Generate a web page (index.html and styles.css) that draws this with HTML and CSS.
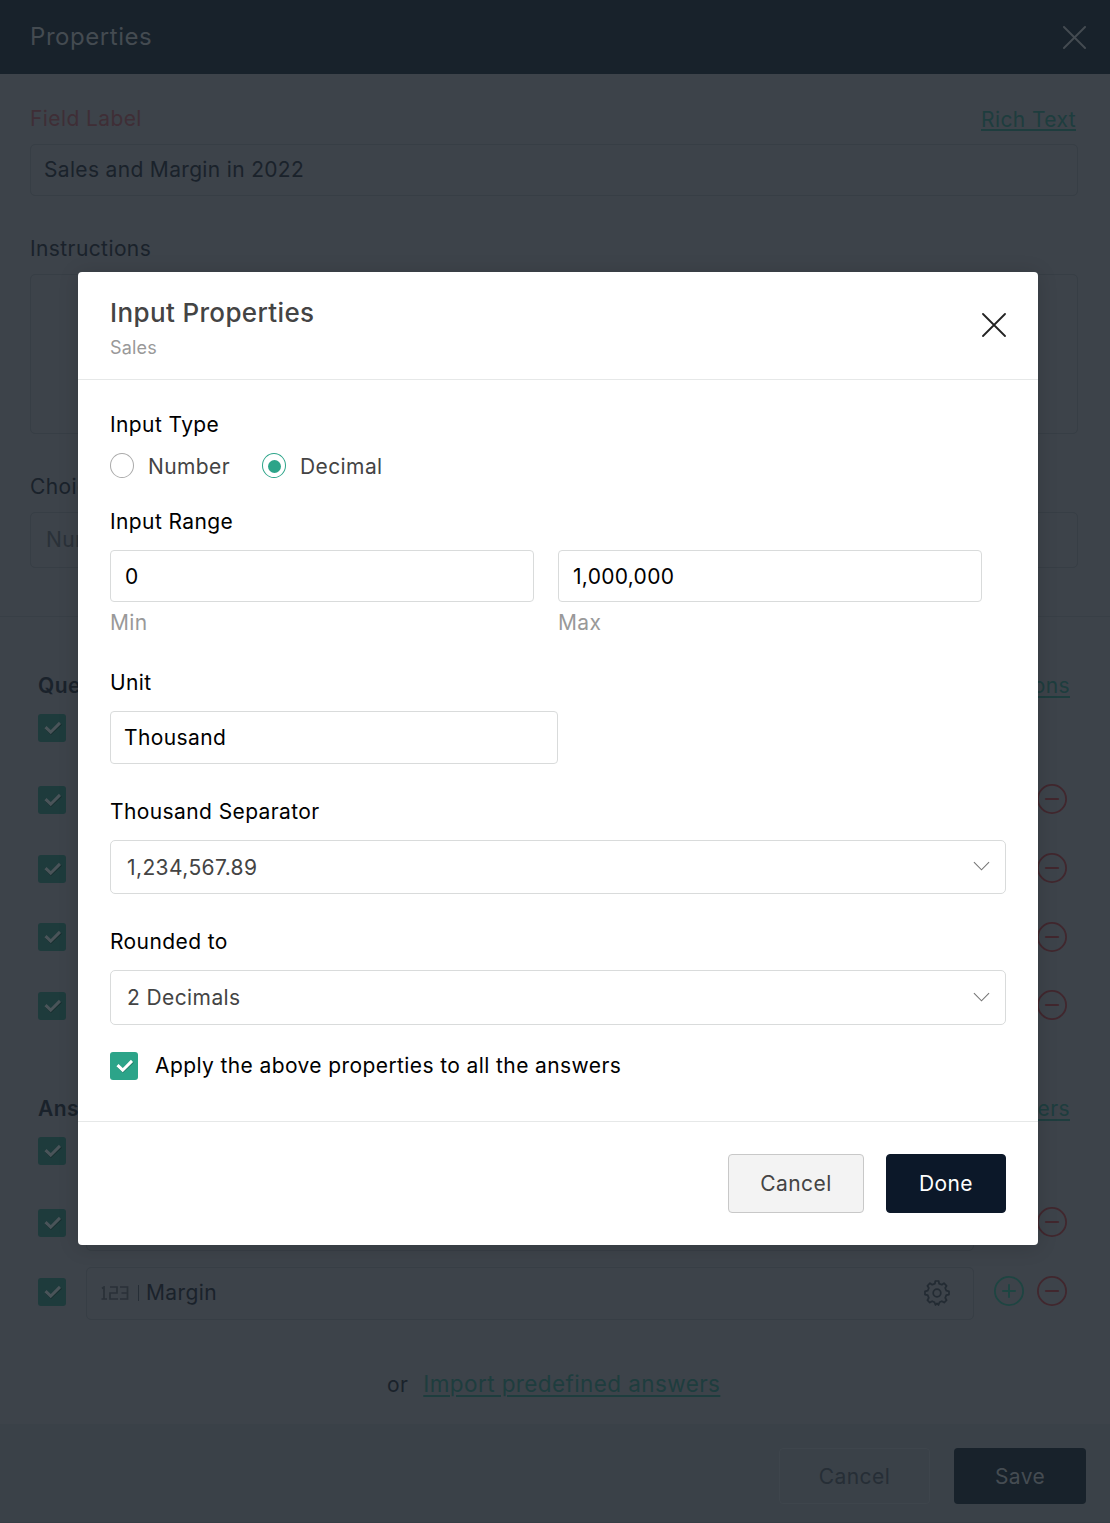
FILE: index.html
```html
<!DOCTYPE html>
<html lang="en">
<head>
    <meta charset="UTF-8">
    <meta name="viewport" content="width=device-width, initial-scale=1.0">
    <title>Input Properties</title>
    <link rel="stylesheet" href="styles.css">
</head>
<body>

<!-- Shared icons -->
<svg class="sprite" xmlns="http://www.w3.org/2000/svg">
    <symbol id="check" viewBox="0 0 28 28">
        <path class="check-shadow" d="M8.3 14.5 L13 19 L22.8 9.6" fill="none" stroke-width="3" />
        <path d="M7.5 13.2 L12.7 18.2 L22 8.9" fill="none" stroke="currentColor" stroke-width="3" />
    </symbol>
    <symbol id="close" viewBox="0 0 24 24">
        <path d="M1 1 L23 23 M23 1 L1 23" fill="none" stroke="currentColor" stroke-linecap="round" />
    </symbol>
    <symbol id="chevron" viewBox="0 0 18 10">
        <path d="M1 1 L9 9 L17 1" fill="none" stroke="currentColor" stroke-width="1.2" />
    </symbol>
    <symbol id="minus" viewBox="0 0 30 30">
        <circle cx="15" cy="15" r="14.1" fill="none" stroke="currentColor" stroke-width="1.8" />
        <path d="M9 15 H21" stroke="currentColor" stroke-width="2.2" stroke-linecap="round" />
    </symbol>
    <symbol id="plus" viewBox="0 0 30 30">
        <circle cx="15" cy="15" r="14.1" fill="none" stroke="currentColor" stroke-width="1.8" />
        <path d="M9 15 H21 M15 9 V21" stroke="currentColor" stroke-width="2" stroke-linecap="round" />
    </symbol>
    <symbol id="gear" viewBox="0 0 26 26">
        <path d="M10.9 3.6 L11.3 1 H14.7 L15.1 3.6 L17.8 4.7 L20 3.2 L22.6 5.8 L21.2 8 L22.3 10.7 L25 11.3 V14.6 L22.3 15.2 L21.2 17.8 L22.6 20.2 L20.2 22.6 L17.8 21.2 L15.5 22.2 L14.5 25 L13 23.4 L11.5 25 L10.5 22.2 L8.2 21.2 L5.8 22.6 L3.4 20.2 L4.8 17.8 L3.7 15.2 L1 14.6 V11.3 L3.7 10.7 L4.8 8 L3.4 5.8 L6 3.2 L8.2 4.7 Z" fill="none" stroke="currentColor" stroke-width="1.7" stroke-linejoin="round" />
        <circle cx="13" cy="13" r="3.8" fill="none" stroke="currentColor" stroke-width="1.7" />
    </symbol>
    <symbol id="numeric" viewBox="0 0 28 14">
        <path d="M1 2.5 L3 1 V13 M0.5 13 H6 M9 1 H16 V7 H9 V13 H17 M19 1 H26.5 V13 H19 M20.5 7 H26.5" fill="none" stroke="currentColor" stroke-width="1.7" />
    </symbol>
</svg>

<div class="panel">
    <div class="panel-header">
        <span>Properties</span>
        <svg class="panel-close"><use href="#close" /></svg>
    </div>

    <div class="panel-form">
        <div class="label-row">
            <span class="required">Field Label</span>
            <a class="link rich">Rich Text</a>
        </div>
        <div class="panel-input">Sales and Margin in 2022</div>
        <div class="panel-label">Instructions</div>
        <div class="panel-textarea"></div>
        <div class="panel-label">Choice Type</div>
        <div class="panel-select">Number</div>
    </div>

    <div class="group questions">
        <div class="group-head"><b>Questions</b><a class="link">Bulk Questions</a></div>
        <div class="check-all"><svg class="check"><use href="#check" /></svg></div>
        <div class="row">
            <svg class="check"><use href="#check" /></svg>
            <div class="row-input"></div>
            <svg class="round add"><use href="#plus" /></svg>
            <svg class="round remove"><use href="#minus" /></svg>
        </div>
        <div class="row">
            <svg class="check"><use href="#check" /></svg>
            <div class="row-input"></div>
            <svg class="round add"><use href="#plus" /></svg>
            <svg class="round remove"><use href="#minus" /></svg>
        </div>
        <div class="row">
            <svg class="check"><use href="#check" /></svg>
            <div class="row-input"></div>
            <svg class="round add"><use href="#plus" /></svg>
            <svg class="round remove"><use href="#minus" /></svg>
        </div>
        <div class="row">
            <svg class="check"><use href="#check" /></svg>
            <div class="row-input"></div>
            <svg class="round add"><use href="#plus" /></svg>
            <svg class="round remove"><use href="#minus" /></svg>
        </div>
    </div>

    <div class="group answers">
        <div class="group-head"><b>Answers</b><a class="link">Bulk Answers</a></div>
        <div class="check-all"><svg class="check"><use href="#check" /></svg></div>
        <div class="row">
            <svg class="check"><use href="#check" /></svg>
            <div class="row-input"></div>
            <svg class="round add"><use href="#plus" /></svg>
            <svg class="round remove"><use href="#minus" /></svg>
        </div>
        <div class="row">
            <svg class="check"><use href="#check" /></svg>
            <div class="row-input">
                <svg class="numeric"><use href="#numeric" /></svg>
                <span class="bar"></span>
                <span class="row-text">Margin</span>
                <svg class="gear"><use href="#gear" /></svg>
            </div>
            <svg class="round add"><use href="#plus" /></svg>
            <svg class="round remove"><use href="#minus" /></svg>
        </div>
    </div>

    <div class="import">or <a class="link">Import predefined answers</a></div>

    <div class="panel-footer">
        <div class="panel-btn">Cancel</div>
        <div class="panel-btn save">Save</div>
    </div>
</div>

<div class="overlay">
    <div class="modal">
        <div class="modal-header">
            <div>
                <div class="modal-title">Input Properties</div>
                <div class="modal-sub">Sales</div>
            </div>
            <svg class="modal-close"><use href="#close" /></svg>
        </div>

        <div class="modal-body">
            <div class="label">Input Type</div>
            <div class="radios">
                <span class="radio"></span><span class="radio-text">Number</span>
                <span class="radio on"></span><span class="radio-text">Decimal</span>
            </div>

            <div class="label range-label">Input Range</div>
            <div class="range">
                <div>
                    <div class="input">0</div>
                    <div class="hint">Min</div>
                </div>
                <div>
                    <div class="input">1,000,000</div>
                    <div class="hint">Max</div>
                </div>
            </div>

            <div class="label unit-label">Unit</div>
            <div class="input unit">Thousand</div>

            <div class="label select-label">Thousand Separator</div>
            <div class="select">1,234,567.89<svg class="chevron"><use href="#chevron" /></svg></div>

            <div class="label select-label">Rounded to</div>
            <div class="select rounded">2 Decimals<svg class="chevron"><use href="#chevron" /></svg></div>

            <div class="apply">
                <svg class="check"><use href="#check" /></svg>
                <span>Apply the above properties to all the answers</span>
            </div>
        </div>

        <div class="modal-footer">
            <div class="btn">Cancel</div>
            <div class="btn done">Done</div>
        </div>
    </div>
</div>

</body>
</html>
```
FILE: styles.css
```css
* {
    box-sizing: border-box;
}
body {
    margin: 0;
    position: relative;
    height: 1523px;
    overflow: hidden;
    background-color: #3d434a;
    font-family: Inter, "Liberation Sans", sans-serif;
    font-size: 21px;
    line-height: 26px;
    letter-spacing: 0.4px;
    color: #1a222b;
}
.sprite {
    position: absolute;
    width: 0;
    height: 0;
}
svg {
    display: block;
    flex: none;
}

/* Panel behind the dialog */
.panel {
    display: flex;
    flex-direction: column;
    height: 1523px;
    border-bottom: 1px solid #363d44;
}
.panel-header {
    display: flex;
    justify-content: space-between;
    align-items: center;
    height: 74px;
    padding: 0 24px 0 30px;
    background-color: #18222b;
    color: #444b51;
    font-size: 24px;
    letter-spacing: 0.55px;
}
.panel-close {
    width: 23px;
    height: 23px;
    stroke-width: 2;
}
.panel-form {
    height: 543px;
    padding: 32px 32px 0 30px;
    border-bottom: 1px solid #383f46;
}
.label-row {
    display: flex;
    justify-content: space-between;
    height: 38px;
    padding-right: 2px;
}
.required {
    color: #3f2e36;
}
.link {
    color: #1e3d3e;
    text-decoration: underline;
    text-decoration-thickness: 2px;
    text-underline-offset: 3px;
}
.rich {
    padding-top: 1px;
    text-underline-offset: 2px;
}
.panel-input,
.panel-textarea,
.panel-select,
.row-input {
    border: 1px solid #373e45;
    border-radius: 5px;
}
.panel-input {
    height: 52px;
    padding: 12px 13px;
    margin-bottom: 40px;
    letter-spacing: 0.33px;
}
.panel-label {
    height: 38px;
}
.panel-textarea {
    height: 160px;
    margin-bottom: 40px;
}
.panel-select {
    height: 56px;
    padding: 14px 15px;
    color: #2a3138;
}
.group {
    padding-left: 38px;
}
.questions {
    height: 423px;
    padding-top: 56px;
}
.answers {
    height: 280px;
    padding-top: 56px;
}
.group-head {
    display: flex;
    justify-content: space-between;
    height: 41px;
    padding-right: 40px;
}
.group-head b {
    font-weight: 600;
}
.check {
    width: 28px;
    height: 28px;
    border-radius: 3px;
    background-color: #1e3b3c;
    color: #4a5459;
}
.check-shadow {
    stroke: rgba(0, 0, 0, 0.25);
}
.check-all {
    display: flex;
    height: 60px;
}
.answers .check-all {
    height: 61px;
}
.row {
    display: flex;
    align-items: center;
    height: 52.7px;
    margin-bottom: 16px;
}
.row .check {
    margin-top: -1px;
}
.answers .row .check {
    margin-top: -3px;
}
.row-input {
    display: flex;
    align-items: center;
    width: 888px;
    height: 53px;
    margin: 0 20px;
    padding: 0 23px 0 14px;
}
.numeric {
    width: 28px;
    height: 14px;
    color: #2a3138;
}
.bar {
    width: 1px;
    height: 16px;
    margin: 0 7px 0 9px;
    background-color: #262e36;
}
.gear {
    width: 26px;
    height: 26px;
    margin-left: auto;
    color: #232b33;
}
.round {
    width: 30px;
    height: 30px;
    margin-top: -2px;
}
.answers .round {
    margin-top: -5px;
}
.add {
    color: #1e4542;
    margin-right: 13px;
}
.remove {
    color: #41272e;
}
.import {
    display: flex;
    gap: 15px;
    height: 104px;
    padding: 52px 0 0 387px;
}
.import .link {
    margin-top: -1px;
    font-size: 22.5px;
}
.panel-footer {
    display: flex;
    flex: 1;
    justify-content: flex-end;
    gap: 24px;
    padding: 24px 24px 0 0;
    background-color: #3a4148;
}
.panel-btn {
    width: 151px;
    height: 56px;
    border: 1px solid #3e454c;
    border-radius: 4px;
    line-height: 55px;
    text-align: center;
    color: #262e36;
}
.save {
    width: 132px;
    background-color: #18222b;
    border: none;
    line-height: 57px;
    color: #454c52;
}

/* Dialog */
.overlay {
    position: absolute;
    top: 272px;
    left: 78px;
}
.modal {
    display: flex;
    flex-direction: column;
    width: 960px;
    height: 973px;
    border-radius: 4px;
    background-color: #fff;
    box-shadow: 0 2px 20px rgba(0, 0, 0, 0.15);
    color: #000;
}
.modal-header {
    display: flex;
    justify-content: space-between;
    height: 108px;
    padding: 26px 32px 0;
    border-bottom: 1px solid #e6e8e8;
}
.modal-title {
    height: 37px;
    line-height: 30px;
    font-size: 26px;
    font-weight: 500;
    letter-spacing: 0.36px;
    color: #444;
}
.modal-sub {
    font-size: 18px;
    letter-spacing: 0.2px;
    color: #999;
}
.modal-close {
    width: 24px;
    height: 24px;
    margin-top: 15px;
    color: #222;
    stroke-width: 1.8;
}
.modal-body {
    height: 741px;
    padding: 32px 32px 0;
}
.label {
    height: 41px;
}
.radios {
    display: flex;
    height: 26px;
    color: #444;
}
.radio {
    display: flex;
    align-items: center;
    justify-content: center;
    width: 24px;
    height: 25px;
    margin-right: 14px;
    border: 1px solid #aaa;
    border-radius: 50%;
}
.radio-text {
    width: 114px;
    padding-top: 1px;
}
.radio.on {
    border-color: #2ca489;
}
.radio.on::after {
    content: "";
    width: 13px;
    height: 13px;
    margin-top: 1px;
    border-radius: 50%;
    background-color: #2ca489;
}
.range-label {
    margin-top: 30px;
}
.range {
    display: flex;
    gap: 24px;
}
.input {
    width: 424px;
    height: 52px;
    padding: 13px 13px 0;
    border: 1px solid #d9dbdb;
    border-radius: 4px;
}
.range .input {
    padding-left: 14px;
    letter-spacing: 0.3px;
}
.hint {
    margin-top: 8px;
    color: #999;
}
.unit-label {
    margin-top: 34px;
}
.unit {
    width: 448px;
    height: 53px;
}
.select-label {
    margin-top: 35px;
}
.select {
    display: flex;
    justify-content: space-between;
    height: 54px;
    padding: 14px 15px 0 16px;
    border: 1px solid #d9dbdb;
    border-radius: 5px;
    color: #444;
}
.rounded {
    height: 55px;
}
.chevron {
    width: 17px;
    height: 10px;
    margin-top: 6px;
    color: #777;
}
.rounded .chevron {
    margin-top: 7px;
}
.apply {
    display: flex;
    align-items: center;
    gap: 17px;
    margin-top: 27px;
}
.apply .check {
    background-color: #2ca489;
    color: #fff;
}
.modal-footer {
    display: flex;
    flex: 1;
    justify-content: flex-end;
    gap: 22px;
    padding: 32px 32px 0 0;
    border-top: 1px solid #e6e8e8;
}
.btn {
    width: 136px;
    height: 59px;
    border: 1px solid #c8c8c8;
    border-radius: 4px;
    line-height: 57px;
    text-align: center;
    background-color: #f3f3f3;
    color: #444;
}
.done {
    width: 120px;
    border-color: #0c1829;
    background-color: #0c1829;
    color: #fff;
}
```
